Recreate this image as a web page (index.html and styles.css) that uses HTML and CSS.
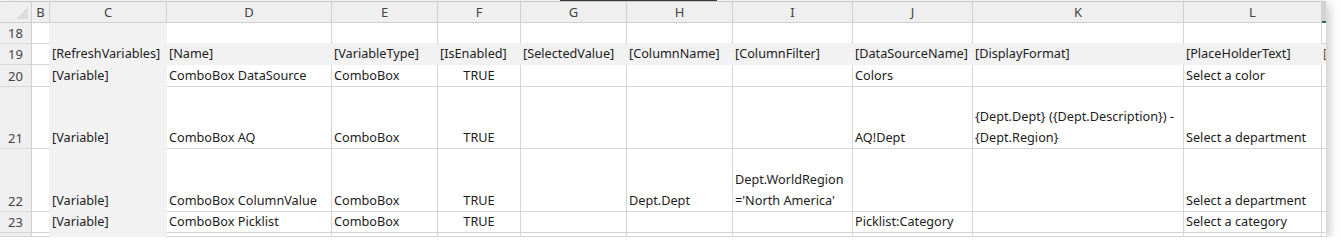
FILE: index.html
```html
<!DOCTYPE html>
<html lang="en">
<head>
<meta charset="utf-8">
<title>Variables sheet</title>
<link rel="stylesheet" href="styles.css">
</head>
<body>
<div class="top-strip"><span class="top-mark"></span></div>
<div class="sheet">
  <!-- column headers -->
  <div class="corner"><span class="corner-tri"></span></div>
  <div class="colhdr">B</div>
  <div class="colhdr">C</div>
  <div class="colhdr">D</div>
  <div class="colhdr">E</div>
  <div class="colhdr">F</div>
  <div class="colhdr">G</div>
  <div class="colhdr">H</div>
  <div class="colhdr">I</div>
  <div class="colhdr">J</div>
  <div class="colhdr">K</div>
  <div class="colhdr">L</div>
  <div class="colhdr sel"></div>

  <!-- row 18 -->
  <div class="rowhdr">18</div>
  <div class="c b"></div>
  <div class="c fill"></div>
  <div class="c above-fill"></div>
  <div class="c above-fill"></div>
  <div class="c above-fill"></div>
  <div class="c above-fill"></div>
  <div class="c above-fill"></div>
  <div class="c above-fill"></div>
  <div class="c above-fill"></div>
  <div class="c above-fill"></div>
  <div class="c above-fill"></div>
  <div class="c m"></div>

  <!-- row 19 -->
  <div class="rowhdr">19</div>
  <div class="c b"></div>
  <div class="c fill">[RefreshVariables]</div>
  <div class="c fill">[Name]</div>
  <div class="c fill">[VariableType]</div>
  <div class="c fill">[IsEnabled]</div>
  <div class="c fill">[SelectedValue]</div>
  <div class="c fill">[ColumnName]</div>
  <div class="c fill">[ColumnFilter]</div>
  <div class="c fill">[DataSourceName]</div>
  <div class="c fill">[DisplayFormat]</div>
  <div class="c fill">[PlaceHolderText]</div>
  <div class="c m fill"><span class="cut">[</span></div>

  <!-- row 20 -->
  <div class="rowhdr">20</div>
  <div class="c b"></div>
  <div class="c fill">[Variable]</div>
  <div class="c">ComboBox DataSource</div>
  <div class="c">ComboBox</div>
  <div class="c center">TRUE</div>
  <div class="c"></div>
  <div class="c"></div>
  <div class="c"></div>
  <div class="c">Colors</div>
  <div class="c"></div>
  <div class="c">Select a color</div>
  <div class="c m"></div>

  <!-- row 21 -->
  <div class="rowhdr">21</div>
  <div class="c b"></div>
  <div class="c fill">[Variable]</div>
  <div class="c">ComboBox AQ</div>
  <div class="c">ComboBox</div>
  <div class="c center">TRUE</div>
  <div class="c"></div>
  <div class="c"></div>
  <div class="c"></div>
  <div class="c">AQ!Dept</div>
  <div class="c">{Dept.Dept} ({Dept.Description}) -<br>{Dept.Region}</div>
  <div class="c">Select a department</div>
  <div class="c m"></div>

  <!-- row 22 -->
  <div class="rowhdr">22</div>
  <div class="c b"></div>
  <div class="c fill">[Variable]</div>
  <div class="c">ComboBox ColumnValue</div>
  <div class="c">ComboBox</div>
  <div class="c center">TRUE</div>
  <div class="c"></div>
  <div class="c">Dept.Dept</div>
  <div class="c">Dept.WorldRegion<br>='North America'</div>
  <div class="c"></div>
  <div class="c"></div>
  <div class="c">Select a department</div>
  <div class="c m"></div>

  <!-- row 23 -->
  <div class="rowhdr">23</div>
  <div class="c b"></div>
  <div class="c fill">[Variable]</div>
  <div class="c">ComboBox Picklist</div>
  <div class="c">ComboBox</div>
  <div class="c center">TRUE</div>
  <div class="c"></div>
  <div class="c"></div>
  <div class="c"></div>
  <div class="c">Picklist:Category</div>
  <div class="c"></div>
  <div class="c">Select a category</div>
  <div class="c m"></div>

  <!-- row 24 (cut off) -->
  <div class="rowhdr"></div>
  <div class="c b"></div>
  <div class="c fill"></div>
  <div class="c"></div>
  <div class="c"></div>
  <div class="c"></div>
  <div class="c"></div>
  <div class="c"></div>
  <div class="c"></div>
  <div class="c"></div>
  <div class="c"></div>
  <div class="c"></div>
  <div class="c m"></div>
</div>
</body>
</html>
```

FILE: styles.css
```css
html, body {
  margin: 0;
  padding: 0;
  background: #ffffff;
}

body {
  font-family: "Noto Sans", "Open Sans", sans-serif;
  font-size: 12.7px;
  color: #1c1c1c;
  overflow: hidden;
}

.top-strip {
  height: 1px;
  display: flex;
}

.top-mark {
  margin-left: 560px;
  width: 157px;
  height: 1px;
  background: #3a3a3a;
}

.sheet {
  display: grid;
  grid-template-columns: 32px 18px 117px 165px 106px 83px 106px 106px 120px 120px 211px 138px 4px;
  grid-template-rows: 21px 21px 21px 22px 62px 63px 21px 4px;
  width: 1326px;
  border-top: 1px solid #c8c8c8;
  box-shadow: 3px 3px 10px rgba(0, 0, 0, 0.22);
  overflow: hidden;
}

.sheet > div {
  box-sizing: border-box;
  overflow: hidden;
  white-space: nowrap;
}

/* header cells */
.corner {
  background: #efefef;
  border-right: 1px solid #cfcfcf;
  border-bottom: 1px solid #cfcfcf;
  display: flex;
  align-items: flex-end;
  justify-content: flex-end;
  padding: 0 3px 3px 0;
}

.corner-tri {
  width: 0;
  height: 0;
  border-left: 12px solid transparent;
  border-bottom: 12px solid #dcdcdc;
}

.colhdr {
  background: #efefef;
  border-right: 1px solid #d0d0d0;
  border-bottom: 1px solid #cfcfcf;
  color: #444444;
  font-size: 13px;
  line-height: 20px;
  text-align: center;
}

.colhdr.sel {
  background: #d2d2d2;
  border-right: none;
  border-bottom: 2px solid #217346;
}

.rowhdr {
  background: #efefef;
  border-right: 1px solid #cfcfcf;
  border-bottom: 1px solid #d6d6d6;
  color: #444444;
  font-size: 13px;
  line-height: 20px;
  text-align: center;
  display: flex;
  align-items: flex-end;
  justify-content: center;
}

/* body cells */
.c {
  background: #ffffff;
  border-right: 1px solid #d4d4d4;
  border-bottom: 1px solid #d4d4d4;
  padding: 0 2px;
  line-height: 21px;
  display: flex;
  align-items: flex-end;
}

.c.center {
  justify-content: center;
}

.c.b {
  border-right-color: #f2f2f2;
}

.c.fill {
  background: #f2f2f2;
  border-right-color: #f2f2f2;
  border-bottom-color: #f2f2f2;
}

.c.above-fill {
  border-bottom-color: #f2f2f2;
}

.c.m {
  border-right: none;
  padding: 0 0 0 1px;
}

.cut {
  color: #7a4a1e;
}
```
